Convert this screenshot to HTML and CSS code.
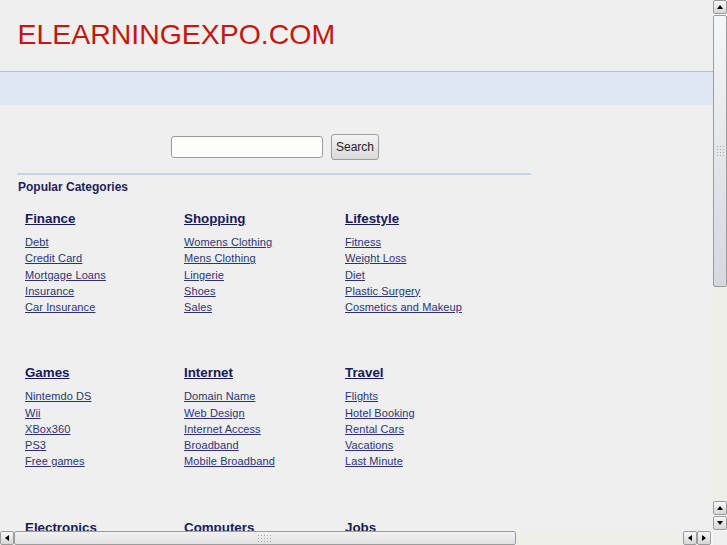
FILE: index.html
```html
<!DOCTYPE html>
<html lang="en">
<head>
<meta charset="utf-8">
<title>ELEARNINGEXPO.COM</title>
<link rel="stylesheet" href="styles.css">
</head>
<body>
<div class="frame">
  <div class="viewport">
    <header class="top">
      <h1 class="logo">ELEARNINGEXPO.COM</h1>
    </header>
    <div class="band"></div>
    <main class="main">
      <form class="search">
        <input class="search-input" type="text">
        <button class="search-btn" type="button">Search</button>
      </form>
      <div class="rule"></div>
      <h2 class="popular">Popular Categories</h2>
      <div class="cats">
        <section class="cat">
          <h3 class="cat-title"><a href="#">Finance</a></h3>
          <ul class="cat-links">
            <li><a href="#">Debt</a></li>
            <li><a href="#">Credit Card</a></li>
            <li><a href="#">Mortgage Loans</a></li>
            <li><a href="#">Insurance</a></li>
            <li><a href="#">Car Insurance</a></li>
          </ul>
        </section>
        <section class="cat">
          <h3 class="cat-title"><a href="#">Shopping</a></h3>
          <ul class="cat-links">
            <li><a href="#">Womens Clothing</a></li>
            <li><a href="#">Mens Clothing</a></li>
            <li><a href="#">Lingerie</a></li>
            <li><a href="#">Shoes</a></li>
            <li><a href="#">Sales</a></li>
          </ul>
        </section>
        <section class="cat">
          <h3 class="cat-title"><a href="#">Lifestyle</a></h3>
          <ul class="cat-links">
            <li><a href="#">Fitness</a></li>
            <li><a href="#">Weight Loss</a></li>
            <li><a href="#">Diet</a></li>
            <li><a href="#">Plastic Surgery</a></li>
            <li><a href="#">Cosmetics and Makeup</a></li>
          </ul>
        </section>
        <section class="cat">
          <h3 class="cat-title"><a href="#">Games</a></h3>
          <ul class="cat-links">
            <li><a href="#">Nintemdo DS</a></li>
            <li><a href="#">Wii</a></li>
            <li><a href="#">XBox360</a></li>
            <li><a href="#">PS3</a></li>
            <li><a href="#">Free games</a></li>
          </ul>
        </section>
        <section class="cat">
          <h3 class="cat-title"><a href="#">Internet</a></h3>
          <ul class="cat-links">
            <li><a href="#">Domain Name</a></li>
            <li><a href="#">Web Design</a></li>
            <li><a href="#">Internet Access</a></li>
            <li><a href="#">Broadband</a></li>
            <li><a href="#">Mobile Broadband</a></li>
          </ul>
        </section>
        <section class="cat">
          <h3 class="cat-title"><a href="#">Travel</a></h3>
          <ul class="cat-links">
            <li><a href="#">Flights</a></li>
            <li><a href="#">Hotel Booking</a></li>
            <li><a href="#">Rental Cars</a></li>
            <li><a href="#">Vacations</a></li>
            <li><a href="#">Last Minute</a></li>
          </ul>
        </section>
        <section class="cat">
          <h3 class="cat-title"><a href="#">Electronics</a></h3>
          <ul class="cat-links">
            <li><a href="#">Cameras</a></li>
            <li><a href="#">Mobile Phones</a></li>
            <li><a href="#">TV</a></li>
            <li><a href="#">Laptops</a></li>
            <li><a href="#">MP3 Players</a></li>
          </ul>
        </section>
        <section class="cat">
          <h3 class="cat-title"><a href="#">Computers</a></h3>
          <ul class="cat-links">
            <li><a href="#">Software</a></li>
            <li><a href="#">Hardware</a></li>
            <li><a href="#">Printers</a></li>
            <li><a href="#">Notebooks</a></li>
            <li><a href="#">Monitors</a></li>
          </ul>
        </section>
        <section class="cat">
          <h3 class="cat-title"><a href="#">Jobs</a></h3>
          <ul class="cat-links">
            <li><a href="#">Careers</a></li>
            <li><a href="#">Part Time</a></li>
            <li><a href="#">Education</a></li>
            <li><a href="#">Resume</a></li>
            <li><a href="#">Salary</a></li>
          </ul>
        </section>
      </div>
    </main>
  </div>

  <div class="vbar">
    <div class="sb-btn"><span class="tri tri-up"></span></div>
    <div class="thumb thumb-v"><span class="grip grip-v"></span></div>
    <div class="track"></div>
    <div class="sb-btn"><span class="tri tri-up"></span></div>
    <div class="sb-btn sb-btn-last"><span class="tri tri-down"></span></div>
  </div>

  <div class="hbar">
    <div class="sb-btn"><span class="tri tri-left"></span></div>
    <div class="thumb thumb-h"><span class="grip grip-h"></span></div>
    <div class="track"></div>
    <div class="sb-btn"><span class="tri tri-left"></span></div>
    <div class="sb-btn sb-btn-end"><span class="tri tri-right"></span></div>
  </div>

  <div class="corner"></div>
</div>
</body>
</html>
```

FILE: styles.css
```css
* {
  box-sizing: border-box;
}

html, body {
  margin: 0;
  padding: 0;
  background: #efefef;
}

body {
  font-family: "Liberation Sans", Arial, sans-serif;
  overflow: hidden;
}

.frame {
  width: 727px;
  height: 545px;
  display: grid;
  grid-template-columns: 713px 14px;
  grid-template-rows: 531px 14px;
  background: #efefef;
}

.viewport {
  overflow: hidden;
  background: #efefef;
}

/* header */
.top {
  height: 72px;
  padding: 17.5px 0 0 17.5px;
  border-bottom: 1px solid #b0c1dc;
}

.logo {
  margin: 0;
  font-size: 28.45px;
  line-height: 32px;
  font-weight: normal;
  color: #c4170f;
  letter-spacing: 0;
}

.band {
  height: 33px;
  background: #dfe6f4;
}

/* main */
.main {
  margin-left: 17px;
  width: 514px;
  padding-top: 29px;
}

.search {
  margin: 0;
  padding-left: 2px;
  display: flex;
  justify-content: center;
  align-items: center;
  gap: 8px;
  height: 26px;
}

.search-input {
  width: 152px;
  height: 22px;
  margin: 0;
  border: 1px solid #9c9c9c;
  border-radius: 3px;
  background: #fdfdfb;
  padding: 0 3px;
  font: 12px "Liberation Sans", Arial, sans-serif;
}

.search-btn {
  width: 48px;
  height: 26px;
  margin: 0;
  padding: 0;
  border: 1px solid #9c9c9c;
  border-radius: 3px;
  background: linear-gradient(#f4f4f4, #d9d9d9);
  color: #222;
  font: 12px "Liberation Sans", Arial, sans-serif;
}

.rule {
  margin-top: 13px;
  height: 2px;
  background: #c7d4e6;
}

.popular {
  margin: 4px 0 0;
  padding-left: 1px;
  font-size: 12px;
  line-height: 16px;
  font-weight: bold;
  color: #1b1f5c;
}

.cats {
  margin-top: 16px;
  padding-left: 8px;
  display: grid;
  grid-template-columns: 159px 161px 160px;
  row-gap: 50px;
}

.cat-title {
  margin: 0 0 7px;
  font-size: 13.33px;
  line-height: 16px;
  font-weight: bold;
}

.cat-title a {
  color: #161b5a;
  text-decoration: underline;
}

.cat-links {
  list-style: none;
  margin: 0;
  padding: 0;
  font-size: 11px;
  line-height: 16.25px;
  letter-spacing: 0.1px;
}

.cat-links a {
  color: #2a3474;
  text-decoration: underline;
}

/* scrollbars */
.vbar {
  display: flex;
  flex-direction: column;
  background: #f6f6f2;
}

.hbar {
  display: flex;
  flex-direction: row;
  background: #f6f6f2;
  padding-right: 2px;
}

.corner {
  background: #efefef;
}

.sb-btn {
  flex: none;
  width: 14px;
  height: 14px;
  border: 1px solid #9a9a9a;
  border-radius: 2px;
  background: linear-gradient(#f8f8f8, #d6d6d6);
  display: flex;
  align-items: center;
  justify-content: center;
}

.vbar .sb-btn-last {
  margin-top: 1px;
  margin-bottom: 1px;
}

.tri {
  width: 0;
  height: 0;
  display: block;
}

.tri-up {
  border-left: 3.5px solid transparent;
  border-right: 3.5px solid transparent;
  border-bottom: 4px solid #000;
}

.tri-down {
  border-left: 3.5px solid transparent;
  border-right: 3.5px solid transparent;
  border-top: 4px solid #000;
}

.tri-left {
  border-top: 3.5px solid transparent;
  border-bottom: 3.5px solid transparent;
  border-right: 4px solid #000;
}

.tri-right {
  border-top: 3.5px solid transparent;
  border-bottom: 3.5px solid transparent;
  border-left: 4px solid #000;
}

.thumb {
  flex: none;
  border: 1px solid #9c9c9c;
  border-radius: 2px;
  display: flex;
  align-items: center;
  justify-content: center;
}

.thumb-v {
  margin-top: 1px;
  height: 272px;
  width: 14px;
  background: linear-gradient(#f4f6fa, #e6e8ec 45%, #d5d8dd);
}

.thumb-h {
  width: 502px;
  height: 14px;
  background: linear-gradient(#f1f1f1, #e2e2e2);
}

.grip {
  display: block;
  background-image: radial-gradient(circle, #a9a9a9 0.7px, transparent 0.9px);
  background-size: 3px 3px;
}

.grip-v {
  width: 9px;
  height: 13px;
}

.grip-h {
  width: 16px;
  height: 9px;
}

.track {
  flex: 1;
  background-color: #f6f6f2;
  background-image: radial-gradient(circle, #e6e6e0 0.6px, transparent 0.8px);
  background-size: 2px 2px;
}
```
